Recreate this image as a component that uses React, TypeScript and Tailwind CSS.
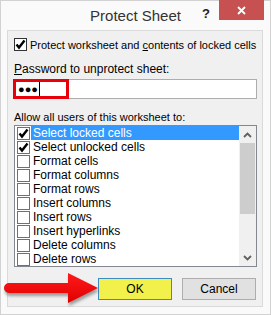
import React from "react";

const items = [
    { label: "Select locked cells", checked: true, selected: true },
    { label: "Select unlocked cells", checked: true },
    { label: "Format cells" },
    { label: "Format columns" },
    { label: "Format rows" },
    { label: "Insert columns" },
    { label: "Insert rows" },
    { label: "Insert hyperlinks" },
    { label: "Delete columns" },
    { label: "Delete rows" },
];

function Check() {
    return (
        <svg width="11" height="11" viewBox="0 0 11 11">
            <path d="M1.5 5.5 L4 8.5 L9.5 1.5" fill="none" stroke="#000" strokeWidth="2.4" />
        </svg>
    );
}

function Box({ checked, dark }: { checked?: boolean; dark?: boolean }) {
    return (
        <div className={`w-[13px] h-[13px] shrink-0 bg-white border flex items-center justify-center ${dark ? 'border-[#333]' : 'border-[#707070]'}`}>
            {checked && <Check />}
        </div>
    );
}

function Arrow() {
    const d = "M8 14 L67 14 L67 4 L97 19 L67 34 L67 24 L8 24 A5 5 0 0 1 8 14 Z";
    return (
        <svg className="absolute left-0 top-[268px]" width="102" height="42" viewBox="0 0 102 42">
            <defs>
                <linearGradient id="rg" x1="0" y1="0" x2="0" y2="1">
                    <stop offset="0" stopColor="#ff1a1a" />
                    <stop offset="1" stopColor="#e00000" />
                </linearGradient>
                <filter id="sh" x="-10%" y="-20%" width="130%" height="160%">
                    <feGaussianBlur stdDeviation="1.5" />
                </filter>
            </defs>
            <path d={d} fill="#555" opacity="0.55" transform="translate(1 3)" filter="url(#sh)" />
            <path d={d} fill="url(#rg)" />
        </svg>
    );
}

export default function App() {
    return (
        <div className="relative w-[271px] h-[315px] bg-[#fafafa] border border-[#d2d2d2] flex flex-col text-black" style={{ fontFamily: '"Liberation Sans", Arial, sans-serif' }}>
            <div className="relative h-[29px] shrink-0 flex justify-center">
                <span className="mt-[6px] text-[15px] leading-[18px] text-[#333]">Protect Sheet</span>
                <span className="absolute left-[201px] top-[3px] text-[13px] font-bold text-[#222]">?</span>
                <div className="absolute left-[218px] top-[-1px] w-[45px] h-[20px] bg-[#c75050] flex items-center justify-center">
                    <svg width="9" height="9" viewBox="0 0 9 9">
                        <path d="M1 1 L8 8 M8 1 L1 8" stroke="#fff" strokeWidth="1.8" />
                    </svg>
                </div>
            </div>

            <div className="ml-[6px] w-[256px] h-[277px] bg-[#f0f0f0] border border-[#dadada] flex flex-col text-[11px] leading-[14px] whitespace-nowrap">
                <div className="flex items-center gap-[3px] mt-[7px] ml-[6px] h-[13px]">
                    <Box checked dark />
                    <span className="text-[11px]">Protect worksheet and <u>c</u>ontents of locked cells</span>
                </div>

                <div className="mt-[11px] ml-[6px] text-[12px]"><u>P</u>assword to unprotect sheet:</div>
                <div className="relative mt-[3px] ml-[5px] w-[244px] h-[20px] bg-white border border-[#adadad] flex items-center">
                    <span className="ml-[4px] text-[11px] leading-[12px]">●●●</span>
                    <span className="ml-[1px] w-px h-[14px] bg-black" />
                    <div className="absolute left-[-1px] top-[-1px] w-[56px] h-[20px] border-[3px] border-[#e8000b]" />
                </div>

                <div className="mt-[11px] ml-[6px]">Allow all users of this worksheet to:</div>

                <div className="mt-[1px] ml-[6px] w-[243px] h-[142px] bg-white border border-[#828790] flex text-[12px]">
                    <div className="w-[224px] flex flex-col">
                        {items.map((it) => (
                            <div key={it.label} className="h-[14px] flex items-center pl-[2px]">
                                <Box checked={it.checked} />
                                <span className={`ml-[1px] h-[14px] flex-1 pl-[2px] ${it.selected ? 'bg-[#3399ff] text-white' : ''}`}>{it.label}</span>
                            </div>
                        ))}
                    </div>
                    <div className="w-[17px] bg-[#f0f0f0] flex flex-col items-center">
                        <div className="h-[17px] flex items-center justify-center">
                            <svg width="9" height="6" viewBox="0 0 9 6"><path d="M1 5 L4.5 1.5 L8 5" fill="none" stroke="#606060" strokeWidth="1.8" /></svg>
                        </div>
                        <div className="w-[15px] h-[71px] bg-[#cdcdcd]" />
                        <div className="flex-1" />
                        <div className="h-[17px] flex items-center justify-center">
                            <svg width="9" height="6" viewBox="0 0 9 6"><path d="M1 1 L4.5 4.5 L8 1" fill="none" stroke="#606060" strokeWidth="1.8" /></svg>
                        </div>
                    </div>
                </div>

                <div className="mt-[11px] flex gap-[10px] ml-[90px] text-[12px]">
                    <div className="w-[74px] h-[22px] bg-[#f2f04a] border border-[#3c8cc0] flex items-center justify-center">OK</div>
                    <div className="w-[74px] h-[22px] bg-[#e1e1e1] border border-[#adadad] flex items-center justify-center">Cancel</div>
                </div>
            </div>

            <Arrow />
        </div>
    );
}
